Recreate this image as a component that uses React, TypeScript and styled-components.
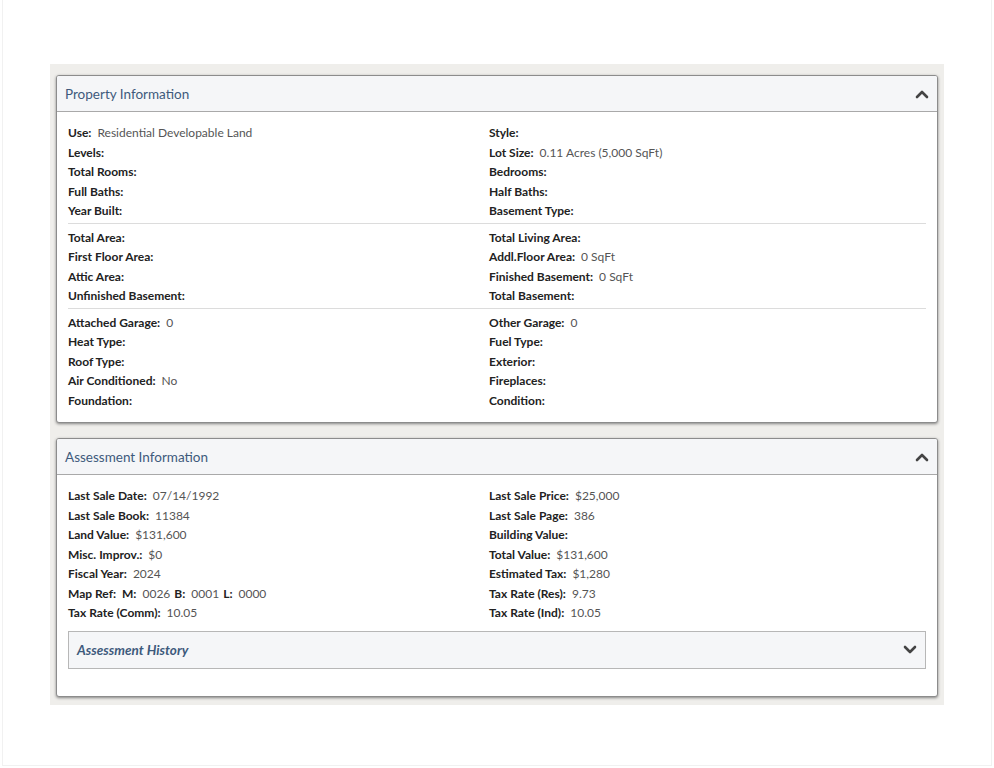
import React from "react";
import styled, { createGlobalStyle } from "styled-components";

const GlobalStyle = createGlobalStyle`
  html, body {
    margin: 0;
    padding: 0;
    background: #ffffff;
  }
  body {
    font-family: Lato, "Open Sans", sans-serif;
  }
`;

const Frame = styled.div`
  width: 990px;
  height: 766px;
  margin: 0 2px;
  box-sizing: border-box;
  border: 1px solid #f1f1f1;
  border-top: none;
  padding-top: 64px;
  padding-left: 47px;
`;

const Tray = styled.div`
  width: 894px;
  box-sizing: border-box;
  background: #efeeeb;
  padding: 11px 6px 8px 6px;
  display: flex;
  flex-direction: column;
  gap: 15px;
`;

const Panel = styled.section`
  background: #fff;
  border: 1px solid #8c8c8c;
  border-radius: 3px;
  box-shadow: 0 1px 3px rgba(0, 0, 0, 0.45);
  overflow: hidden;
`;

const PanelHeader = styled.div`
  height: 35px;
  background: #f5f6f8;
  border-bottom: 1px solid #a9a9a9;
  display: flex;
  align-items: center;
  justify-content: space-between;
  padding: 0 8px 0 8px;
`;

const PanelTitle = styled.h3`
  margin: 0;
  font-size: 13.5px;
  font-weight: 400;
  color: #3e5a7c;
`;

const Body = styled.div<{ $bottom?: number }>`
  padding: 10px 11px ${(p) => p.$bottom ?? 10}px 11px;
`;

const Group = styled.div`
  display: grid;
  grid-template-columns: 421px 1fr;
  padding: 1px 0 2px 0;
  & + & {
    border-top: 1px solid #dcdcdc;
    padding-top: 4px;
  }
`;

const Field = styled.div`
  height: 19.5px;
  line-height: 19.5px;
  font-size: 12px;
  white-space: nowrap;
  color: #222;
`;

const Label = styled.span`
  font-weight: 700;
  margin-right: 6px;
`;

const Value = styled.span`
  color: #555;
  margin-right: 4px;
`;

const SubPanel = styled.div`
  margin-top: 6px;
  height: 36px;
  border: 1px solid #b7b7b7;
  background: #f5f6f8;
  display: flex;
  align-items: center;
  justify-content: space-between;
  padding: 0 8px 0 8px;
`;

const SubTitle = styled.span`
  font-size: 13.5px;
  font-style: italic;
  font-weight: 700;
  color: #3e5a7c;
`;

const Chevron = ({ up }: { up?: boolean }) => (
  <svg width="14" height="10" viewBox="0 0 14 10">
    <polyline
      points={up ? "2,8 7,3 12,8" : "2,2 7,7 12,2"}
      fill="none"
      stroke="#444"
      strokeWidth="2.6"
      strokeLinecap="round"
      strokeLinejoin="round"
    />
  </svg>
);

type Item = [string, string?];

const Row = ({ items }: { items: Item[] }) => (
  <Field>
    {items.map(([l, v], i) => (
      <React.Fragment key={i}>
        <Label>{l}</Label>
        {v && <Value>{v}</Value>}
      </React.Fragment>
    ))}
  </Field>
);

const propertyGroups: [Item[], Item[]][] = [
  [
    [["Use:", "Residential Developable Land"], ["Levels:"], ["Total Rooms:"], ["Full Baths:"], ["Year Built:"]],
    [["Style:"], ["Lot Size:", "0.11 Acres (5,000 SqFt)"], ["Bedrooms:"], ["Half Baths:"], ["Basement Type:"]],
  ],
  [
    [["Total Area:"], ["First Floor Area:"], ["Attic Area:"], ["Unfinished Basement:"]],
    [["Total Living Area:"], ["Addl.Floor Area:", "0 SqFt"], ["Finished Basement:", "0 SqFt"], ["Total Basement:"]],
  ],
  [
    [["Attached Garage:", "0"], ["Heat Type:"], ["Roof Type:"], ["Air Conditioned:", "No"], ["Foundation:"]],
    [["Other Garage:", "0"], ["Fuel Type:"], ["Exterior:"], ["Fireplaces:"], ["Condition:"]],
  ],
];

const assessLeft: Item[][] = [
  [["Last Sale Date:", "07/14/1992"]],
  [["Last Sale Book:", "11384"]],
  [["Land Value:", "$131,600"]],
  [["Misc. Improv.:", "$0"]],
  [["Fiscal Year:", "2024"]],
  [["Map Ref:"], ["M:", "0026"], ["B:", "0001"], ["L:", "0000"]],
  [["Tax Rate (Comm):", "10.05"]],
];

const assessRight: Item[][] = [
  [["Last Sale Price:", "$25,000"]],
  [["Last Sale Page:", "386"]],
  [["Building Value:"]],
  [["Total Value:", "$131,600"]],
  [["Estimated Tax:", "$1,280"]],
  [["Tax Rate (Res):", "9.73"]],
  [["Tax Rate (Ind):", "10.05"]],
];

const Column = styled.div``;

export default function App() {
  return (
    <Frame>
      <GlobalStyle />
      <Tray>
        <Panel>
          <PanelHeader>
            <PanelTitle>Property Information</PanelTitle>
            <Chevron up />
          </PanelHeader>
          <Body>
            {propertyGroups.map(([left, right], gi) => (
              <Group key={gi}>
                <Column>
                  {left.map((it, i) => (
                    <Row key={i} items={[it]} />
                  ))}
                </Column>
                <Column>
                  {right.map((it, i) => (
                    <Row key={i} items={[it]} />
                  ))}
                </Column>
              </Group>
            ))}
          </Body>
        </Panel>
        <Panel>
          <PanelHeader>
            <PanelTitle>Assessment Information</PanelTitle>
            <Chevron up />
          </PanelHeader>
          <Body $bottom={27}>
            <Group>
              <Column>
                {assessLeft.map((items, i) => (
                  <Row key={i} items={items} />
                ))}
              </Column>
              <Column>
                {assessRight.map((items, i) => (
                  <Row key={i} items={items} />
                ))}
              </Column>
            </Group>
            <SubPanel>
              <SubTitle>Assessment History</SubTitle>
              <Chevron />
            </SubPanel>
          </Body>
        </Panel>
      </Tray>
    </Frame>
  );
}
